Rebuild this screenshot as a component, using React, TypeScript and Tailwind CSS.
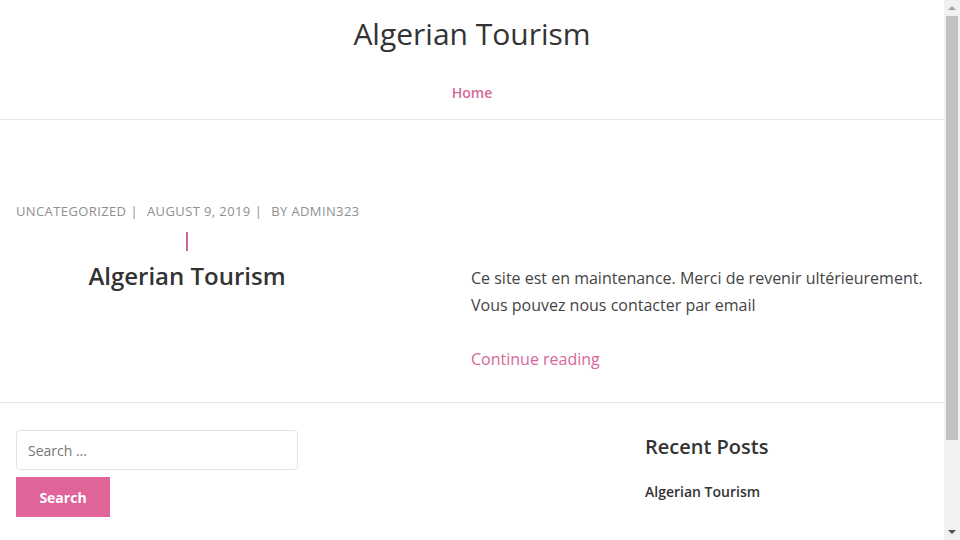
import React from "react"

const pink = "text-[#d6679a]"

function Scrollbar() {
  return (
    <div className="w-4 h-full bg-[#f1f1f1] flex flex-col items-center">
      <div className="h-4 w-full flex items-center justify-center">
        <div className="w-0 h-0 border-l-4 border-r-4 border-b-4 border-l-transparent border-r-transparent border-b-[#a3a3a3]" />
      </div>
      <div className="w-[12px] h-[424px] bg-[#c1c1c1]" />
      <div className="flex-1" />
      <div className="h-4 w-full flex items-center justify-center">
        <div className="w-0 h-0 border-l-4 border-r-4 border-t-4 border-l-transparent border-r-transparent border-t-[#505050]" />
      </div>
    </div>
  )
}

export default function App() {
  return (
    <div className="w-[960px] h-[540px] overflow-hidden flex bg-white font-['Open_Sans',sans-serif] text-[#333]">
      <div className="w-[944px] h-full">
        {/* header */}
        <header className="border-b border-[#e5e5e5]">
          <h1 className="text-center text-[30px] leading-[36px] pt-[16px] text-[#333]">Algerian Tourism</h1>
          <nav className="flex justify-center pt-[31px] pb-[16px]">
            <a className={`text-[14px] leading-[20px] font-semibold ${pink}`}>Home</a>
          </nav>
        </header>

        {/* post */}
        <article className="px-4 pt-[82px] pb-[29px] border-b border-[#e5e5e5]">
          <div className="text-[13px] leading-[18px] tracking-[0.03em] uppercase text-[#8f8f8f] flex gap-[4px]">
            <span>Uncategorized</span>
            <span>|</span>
            <span className="ml-[5px]">August 9, 2019</span>
            <span>|</span>
            <span className="ml-[5px]">By admin323</span>
          </div>
          <div className="flex">
            <div className="w-[342px] flex flex-col items-center">
              <div className="w-[2px] h-[19px] bg-[#c8679a] mt-[12px]" />
              <h2 className="text-[24px] leading-[32px] font-semibold mt-[9px] text-[#333]">Algerian Tourism</h2>
            </div>
            <div className="ml-[113px] pt-[45px] text-[16px] leading-[27px] text-[#444]">
              <p>Ce site est en maintenance. Merci de revenir ultérieurement.</p>
              <p>Vous pouvez nous contacter par email</p>
              <p className={`mt-[27px] ${pink}`}>Continue reading</p>
            </div>
          </div>
        </article>

        {/* footer widgets */}
        <section className="px-4 pt-[27px] flex">
          <div className="w-[282px]">
            <div className="h-[40px] border border-[#e3e3e3] rounded-[4px] flex items-center px-[11px] text-[14px] text-[#767676]">
              Search …
            </div>
            <button className="mt-[7px] w-[94px] h-[40px] bg-[#e0649a] text-white text-[14px] font-bold">Search</button>
          </div>
          <div className="ml-[347px] pt-[3px]">
            <h3 className="text-[20px] leading-[28px] font-semibold text-[#333]">Recent Posts</h3>
            <p className="mt-[21px] text-[14px] leading-[20px] font-semibold text-[#333]">Algerian Tourism</p>
          </div>
        </section>
      </div>
      <Scrollbar />
    </div>
  )
}
